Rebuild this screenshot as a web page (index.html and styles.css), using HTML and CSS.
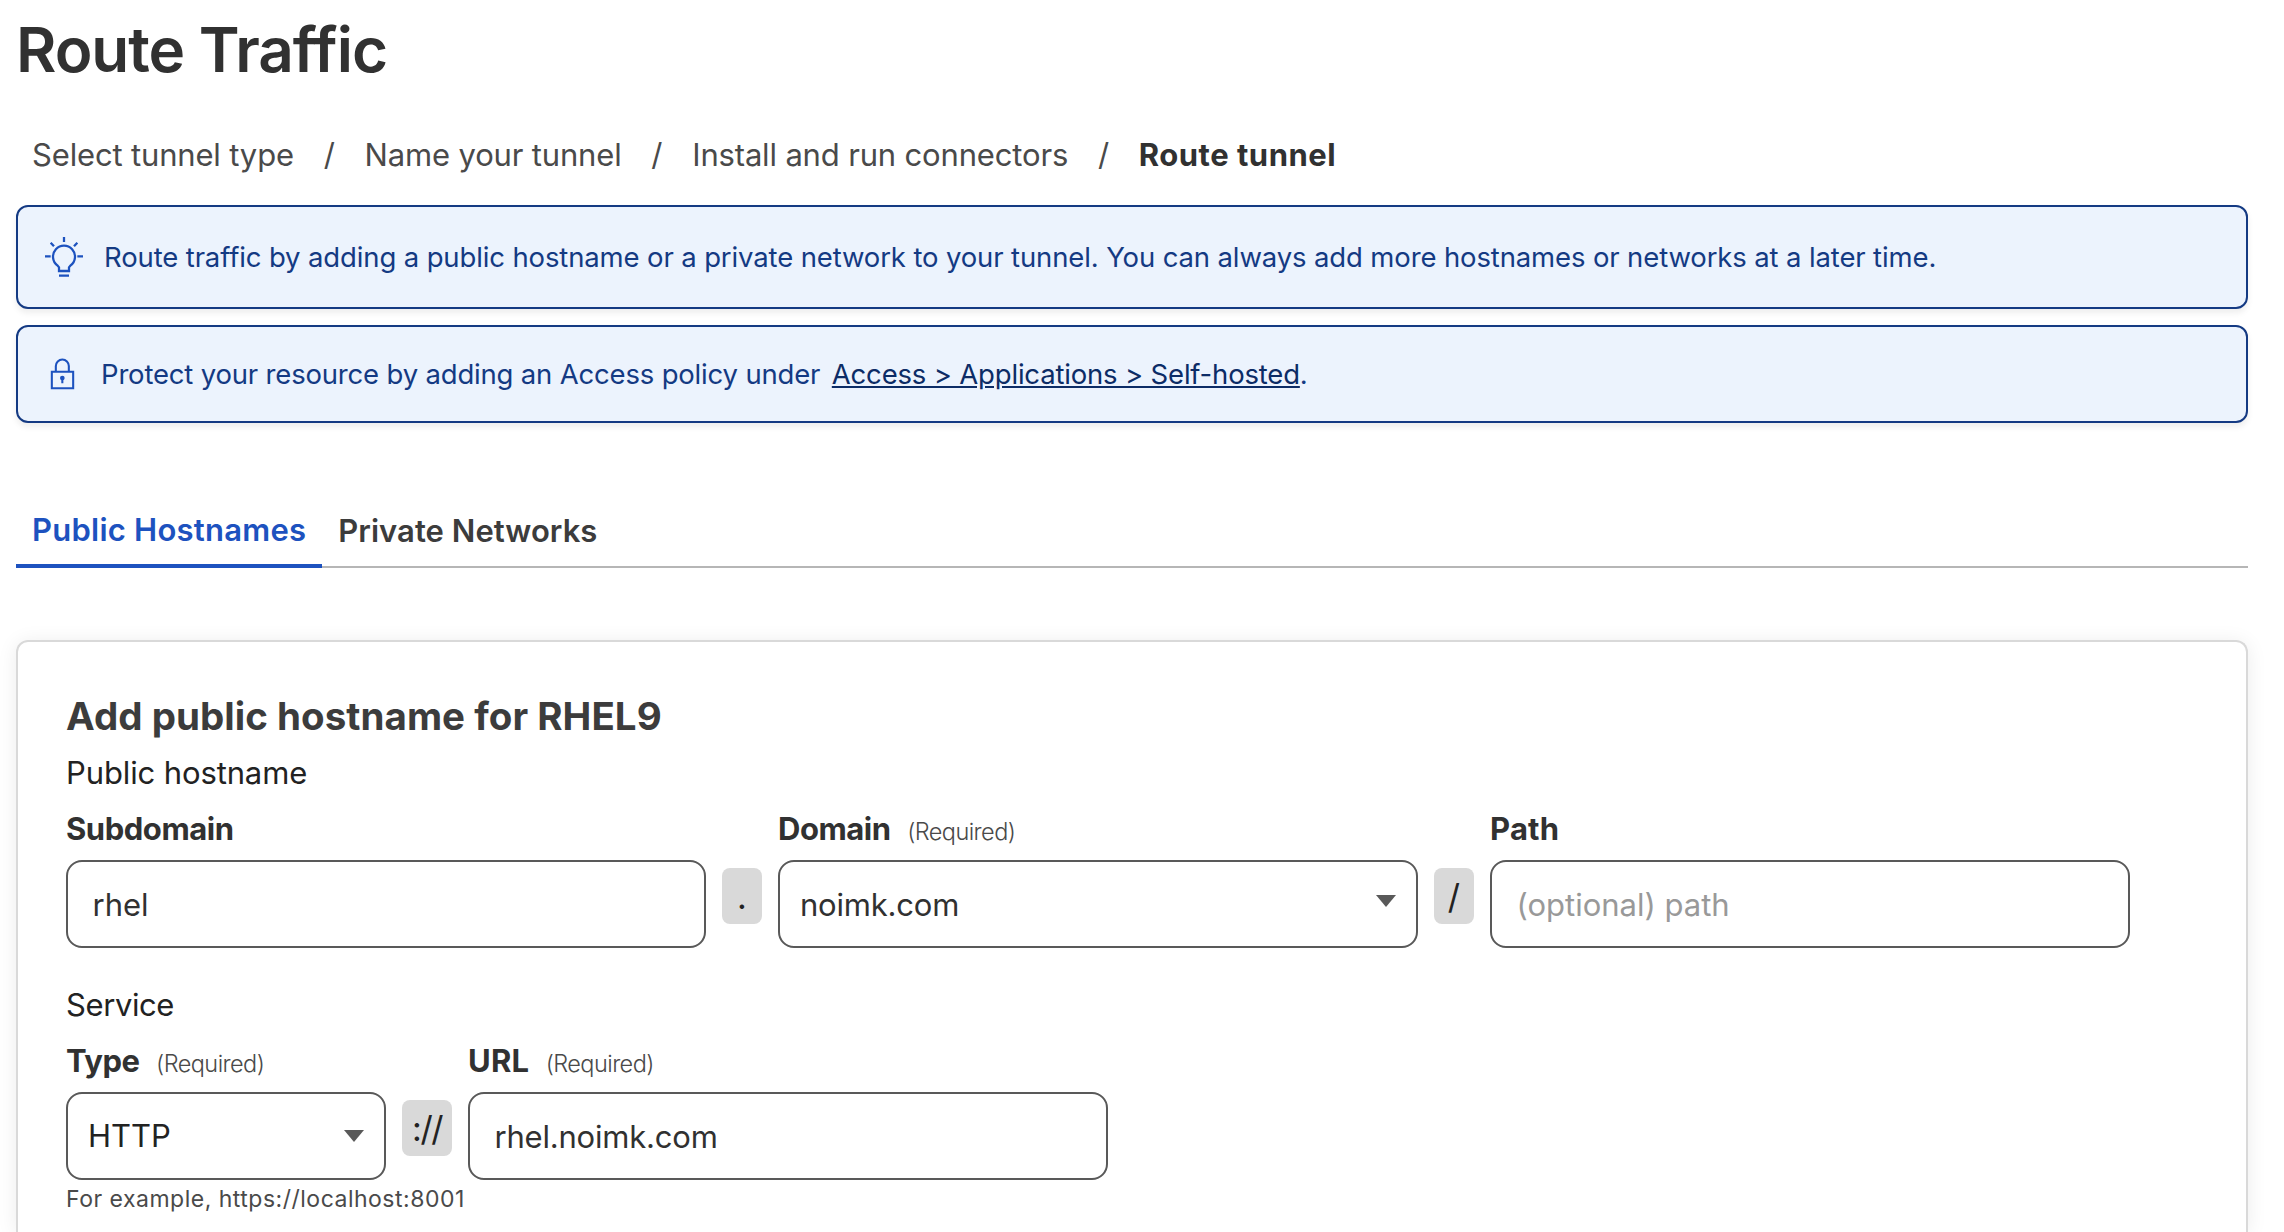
FILE: index.html
```html
<!DOCTYPE html>
<html lang="en">
<head>
<meta charset="utf-8">
<title>Route Traffic</title>
<link rel="stylesheet" href="styles.css">
</head>
<body>
<main class="page">
  <h1 class="title">Route Traffic</h1>
  <nav class="crumbs">
    <span>Select tunnel type</span><span class="slash">/</span>
    <span>Name your tunnel</span><span class="slash">/</span>
    <span>Install and run connectors</span><span class="slash">/</span>
    <span class="current">Route tunnel</span>
  </nav>
  <section class="alert alert-tip">
    <svg class="icon-bulb" viewBox="0 0 144 144"><path d="M57 108V97L52 91A33 33 0 1 1 92 91L87 97V108ZM57 122H87M72 6V21M15 64H32M112 64H129M32 23L42 34M112 23L102 34"/></svg>
    <p>Route traffic by adding a public hostname or a private network to your tunnel. You can always add more hostnames or networks at a later time.</p>
  </section>
  <section class="alert alert-lock">
    <svg class="icon-lock" viewBox="0 0 105 105"><path d="M20.5 50.5H84.5V99.5H20.5ZM32.5 50V33A19.5 19.5 0 0 1 71.5 33V50M52 69V85"/><circle cx="52" cy="69" r="7"/></svg>
    <p>Protect your resource by adding an Access policy under <a class="link">Access &gt; Applications &gt; Self-hosted</a>.</p>
  </section>
  <div class="tabs">
    <div class="tab active">Public Hostnames</div>
    <div class="tab">Private Networks</div>
  </div>
  <section class="card">
    <h2 class="heading">Add public hostname for RHEL9</h2>
    <p class="group">Public hostname</p>
    <div class="row">
      <div class="field"><label class="label"><b>Subdomain</b></label><input class="box input" value="rhel"></div>
      <span class="sep">.</span>
      <div class="field">
        <label class="label"><b>Domain</b><span class="req">(Required)</span></label>
        <div class="box select domain">noimk.com<svg class="arrow" viewBox="0 0 20 12"><path d="M0 0H20L10 12Z"/></svg></div>
      </div>
      <span class="sep">/</span>
      <div class="field"><label class="label"><b class="loose">Path</b></label><input class="box input" placeholder="(optional) path"></div>
    </div>
    <p class="group service">Service</p>
    <div class="row">
      <div class="field short">
        <label class="label"><b>Type</b><span class="req">(Required)</span></label>
        <div class="box select type">HTTP<svg class="arrow" viewBox="0 0 20 12"><path d="M0 0H20L10 12Z"/></svg></div>
      </div>
      <span class="sep wide">://</span>
      <div class="field"><label class="label"><b class="loose">URL</b><span class="req">(Required)</span></label><input class="box input url" value="rhel.noimk.com"></div>
    </div>
    <p class="help">For example, https://localhost:8001</p>
  </section>
</main>
</body>
</html>
```
FILE: styles.css
```css
* { box-sizing: border-box; }
html, body { margin: 0; height: 1232px; overflow: hidden; background: #fff; }
body { font-family: Inter, "Liberation Sans", sans-serif; font-size: 31px; line-height: 40px; color: #222; }
h1, h2, p { margin: 0; }
.page { padding: 12px 36px 0 16px; }
.title { font-size: 62px; line-height: 76px; font-weight: 600; letter-spacing: -1.03px; color: #313131; }
.crumbs { display: flex; margin-top: 47px; padding-left: 16px; letter-spacing: -0.16px; color: #4a4a4a; }
.current { font-weight: 700; letter-spacing: 0.5px; color: #313131; }
.slash { width: 70.7px; text-align: center; }
.alert { display: flex; align-items: center; margin-top: 16px; border: 2px solid #143a83; border-radius: 12px; background: #ecf3fd; box-shadow: 0 4px 6px rgba(0,0,0,.07); color: #143a83; font-size: 27.5px; letter-spacing: -0.13px; }
.alert-tip { height: 104px; margin-top: 30px; padding-left: 22px; gap: 16px; }
.alert-lock { height: 98px; padding-left: 27px; gap: 21px; letter-spacing: -0.18px; }
.icon-bulb { width: 48px; height: 48px; margin-top: 4px; fill: none; stroke: #1d52bf; stroke-width: 6.8; }
.icon-lock { width: 35px; height: 35px; margin-bottom: 3px; fill: none; stroke: #1d52bf; stroke-width: 6.2; }
.icon-lock circle { fill: #1d52bf; stroke: none; }
.link { margin-left: 4px; color: #0c2c66; text-decoration: underline; }
.tabs { display: flex; margin-top: 87px; border-bottom: 2px solid #b6b6b6; font-weight: 600; letter-spacing: 0.04px; color: #3c3c3c; }
.tab { padding: 1px 16px 17px; margin-bottom: -2px; }
.active { padding: 0 16px 14px; border-bottom: 4px solid #1d52bf; letter-spacing: 0.24px; color: #1d52bf; }
.card { height: 592px; margin-top: 72px; padding: 50px 48px 0; border: 2px solid #d9d9d9; border-bottom: 0; border-radius: 12px 12px 0 0; box-shadow: 0 2px 20px rgba(0,0,0,.08); }
.heading { font-size: 38.5px; line-height: 48px; font-weight: 700; letter-spacing: 0.04px; color: #3c3c3c; }
.group { margin-top: 13px; letter-spacing: -0.12px; }
.service { margin-top: 37px; letter-spacing: -0.4px; }
.row { display: flex; align-items: flex-end; gap: 16px; margin-top: 16px; }
.field { width: 640px; }
.short { width: 320px; }
.label { display: flex; align-items: baseline; gap: 16.5px; height: 40px; margin-bottom: 11px; color: #313131; }
.label b { font-weight: 700; letter-spacing: -0.46px; }
.label .loose { letter-spacing: 0.2px; }
.req { font-size: 23.5px; font-weight: 300; letter-spacing: -0.57px; color: #4a4a4a; }
.box { display: flex; align-items: center; width: 100%; height: 88px; border: 2px solid #595959; border-radius: 16px; background: #fff; font: inherit; color: #313131; }
.input { padding: 0 24.5px; }
.url { letter-spacing: -0.2px; }
.input::placeholder { color: #999; }
.select { justify-content: space-between; padding: 0 20px; }
.domain { padding-top: 1px; letter-spacing: -0.2px; }
.domain .arrow { margin-bottom: 7px; }
.type { color: #222; }
.arrow { width: 20px; height: 12px; fill: #595959; }
.sep { width: 40px; height: 56px; margin-bottom: 24px; border-radius: 8px; background: #d9d9d9; text-align: center; font-size: 34px; line-height: 57px; }
.wide { width: 50px; letter-spacing: -1.5px; }
.help { margin-top: 3px; font-size: 23px; line-height: 32px; letter-spacing: 0.5px; color: #4a4a4a; }
```
